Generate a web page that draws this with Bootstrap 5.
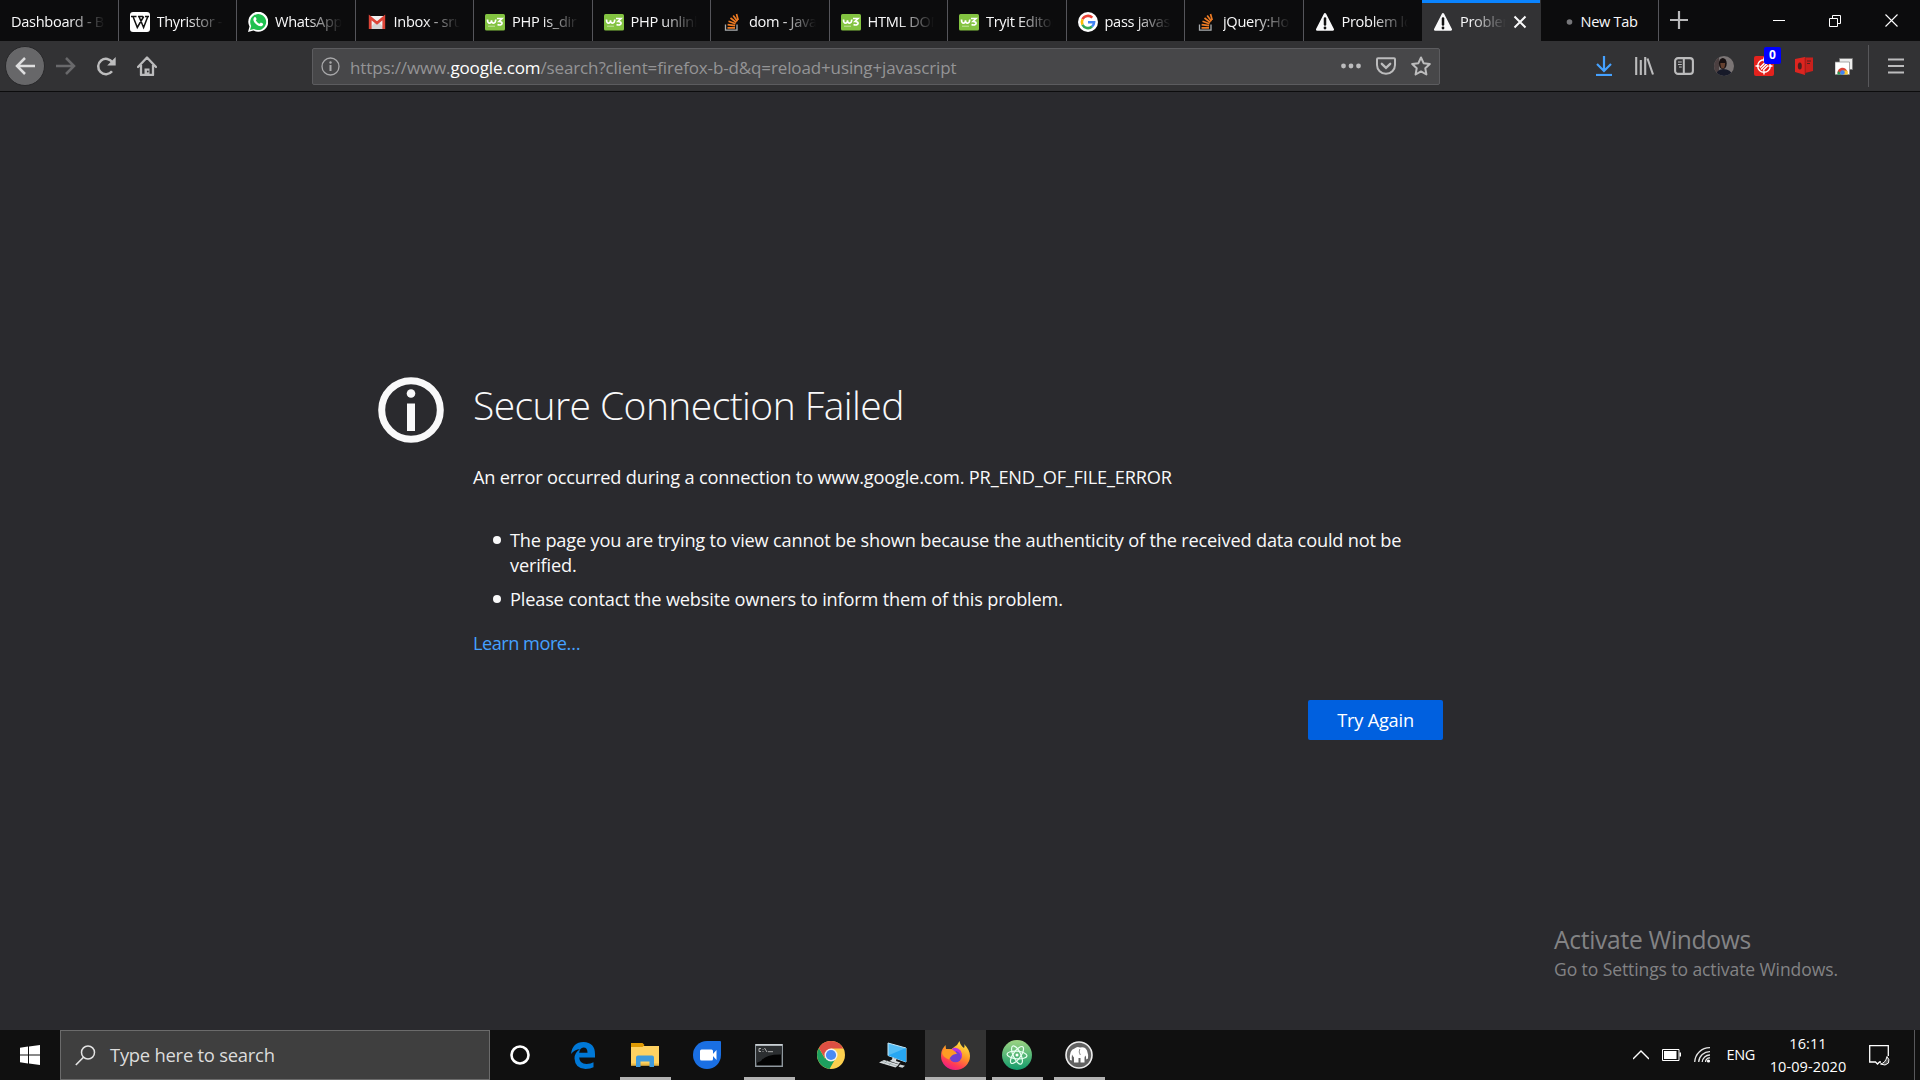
<!DOCTYPE html>
<html lang="en">
<head>
<meta charset="utf-8">
<title>Secure Connection Failed</title>
<link href="https://cdn.jsdelivr.net/npm/bootstrap@5.3.0/dist/css/bootstrap.min.css" rel="stylesheet">
<script src="https://cdn.jsdelivr.net/npm/bootstrap@5.3.0/dist/js/bootstrap.bundle.min.js"></script>
<style>
body{font-family:"Open Sans","Noto Sans",sans-serif;background:#2a2a2e;color:#f9f9fa}
svg{display:block;flex:none}
.tabstrip{height:41px;background:#0c0c0d}
.tab{width:118.5px;padding:2px 13px 0 11px;border-right:1px solid #55555a;font-size:14.6px;letter-spacing:-.32px;gap:7px}
.tab-title{flex:1 1 0;min-width:0;-webkit-mask-image:linear-gradient(to left,transparent 0,#000 36px);mask-image:linear-gradient(to left,transparent 0,#000 36px)}
.tab-before{border-right-color:transparent}
.tab-active{background:#323234;box-shadow:inset 0 3px #0a84ff;border-right-color:transparent}
.tab-new{padding-left:12px}
.tab-new .tab-title{-webkit-mask-image:none;mask-image:none}
.winbtn{width:56.5px;height:41px}
.toolbar{height:51px;background:#323234;border-bottom:1px solid #0c0c0d;padding-left:5px}
.navbtns{width:307px;gap:.6px}
.tool{width:40px;height:40px}
.backbtn{background:#676769;border:1px solid #28282a}
.urlbar{width:1128px;height:37px;background:#474749;border:1px solid #5c5c5f;border-radius:2px;padding:0 1px 0 8px}
.urltext{font-size:17px;color:#949496;margin-left:10px;letter-spacing:-.13px;padding-top:3px}
.urltext b{color:#fff;font-weight:400}
.urlicon{width:35px}
.count{top:-9px;left:10px;background:#00f;width:17px;height:17px;font-size:12px;line-height:15px;border-radius:2px;padding:0}
.tool-sep{width:1px;height:42px;background:#58585b}
.menu-btn{padding:0 16px 0 19px}
.page-area{padding:285px 0 0 378px}
.error-box{width:1065px;gap:28px}
.error-copy{font-size:18.2px;line-height:25px;letter-spacing:-.18px}
.error-title{font-size:39px;line-height:56px;font-weight:300;letter-spacing:-.57px;margin:0 0 32px}
.error-list{margin:38px 0 19px;padding:0;list-style:none}
.error-list li{display:flex;gap:9px;padding-left:20px}
.error-list li+li{margin-top:9px}
.error-list li::before{content:"";flex:none;width:8px;height:8px;border-radius:50%;background:#f9f9fa;margin-top:8px}
.learn{color:#45a1ff;text-decoration:none;letter-spacing:-.5px}
.retry{width:135px;height:40px;background:#0060df;color:#fff;border-radius:2px;font-size:18.2px;letter-spacing:-.2px;margin-top:44px;padding:1px 0 0;border:0}
.watermark{left:1554px;top:921px;color:#838385}
.watermark .wm-a{font-size:24.6px;line-height:38px;letter-spacing:-.3px}
.watermark .wm-b{font-size:17.5px;line-height:20px;letter-spacing:-.08px}
.taskbar{height:50px;background:#101010}
.startbtn{width:60px}
.searchbox{width:430px;background:#3f3f3f;border:1px solid #6b6b6b;padding-left:14px;gap:14px;font-size:18.4px;letter-spacing:-.24px;color:#dcdcdc}
.app{width:62px;height:50px}
.app-cortana{width:60px;margin-right:2px}
.app.running{background:linear-gradient(#b2b2b2,#b2b2b2) center bottom/51px 3px no-repeat}
.app.focused{background:linear-gradient(#b2b2b2,#b2b2b2) center bottom/61px 3px no-repeat,linear-gradient(#333,#333) center/61px 50px no-repeat}
.tray{font-size:14.5px;letter-spacing:-.35px;color:#fff}
.tray-gap{margin-left:13px}
.clock{line-height:23px;width:90px;letter-spacing:.1px}
.desk-edge{width:1px;height:50px;background:#58585b;margin:0 5px 0 24px}
</style>
</head>
<body class="vh-100 overflow-hidden d-flex flex-column">
<svg width="0" height="0" class="position-absolute">
<defs>
<symbol id="w3" viewBox="0 0 20 20"><rect y="2" width="20" height="16.500" rx="1.500" fill="#83c341"/><path d="M2.500 7.500c0 5 4 4.500 4 .8 0 3.700 4 4 4.300-.8M12 6.500h5l-3 3c5 0 3.500 5-1.500 3" fill="none" stroke="#fff" stroke-width="1.700"/><path d="M3 14.200h7" stroke="#c5e5a0"/></symbol>
<symbol id="so" viewBox="0 0 20 20"><path d="M3.500 12.500v5.700h11.500v-5.700" fill="none" stroke="#a9adb0" stroke-width="1.300"/><path d="M5.500 15.800h7.500M5.600 12.600l7.500 1M6.500 9.300l7 2.500M8.500 6l5.800 4.400M11.200 3.500l4.200 5.800M14.500 2l1.700 6" stroke="#ef7c24" stroke-width="1.700"/></symbol>
<symbol id="warn" viewBox="0 0 20 20"><path d="M10 2.300 17.800 17.500H2.200z" fill="#f9f9fa" stroke="#f9f9fa" stroke-width="2.500" stroke-linejoin="round"/><path d="M10 6.500v6" stroke="#111" stroke-width="2.500" stroke-linecap="round"/><circle cx="10" cy="16" r="1.400" fill="#111"/></symbol>
<symbol id="chrome" viewBox="0 0 28 28"><circle cx="14" cy="14" r="14" fill="#fdd04e"/><path d="M1.900 7A14 14 0 0 0 12.500 27.900l6-10.500L14 14 7.900 17.500z" fill="#1da05f"/><path d="M14 7.500h12.300A14 14 0 0 0 1.900 7l6 10z" fill="#dd4f43"/><circle cx="14" cy="14" r="6.500" fill="#f2f2f2"/><circle cx="14" cy="14" r="5.100" fill="#4a8af4"/></symbol>
</defs>
</svg>

<header>
<div class="tabstrip d-flex text-nowrap">
<div class="tab d-flex align-items-center"><span class="tab-title overflow-hidden">Dashboard - Bl</span></div>
<div class="tab d-flex align-items-center"><svg width="20" height="20"><rect width="20" height="20" rx="3" fill="#fff"/><path d="M1 4.500h5.500M8 4.500h5M15 4.500h4M3 4.500l4.300 11L13.700 4.500M9 4.500l4.600 11L17.800 4.500" stroke="#111" stroke-width="1.500" fill="none"/></svg><span class="tab-title overflow-hidden">Thyristor -</span></div>
<div class="tab d-flex align-items-center"><svg width="20" height="20"><path d="M0 20 1.500 14.500A10 10 0 1 1 5.500 18.500z" fill="#fff"/><path d="M2 18 3.200 14A8 8 0 1 1 6 16.900z" fill="#1fc04f"/><path d="M6.200 5.500c1-1 1.800-.4 2.400 1.700l-.8 1.400q1.500 2.400 3.800 3.200l1.200-1.300q2.500.8 2.400 1.700c-.8 3-4.400 2.400-7 .1-2.800-2.400-3.700-5-2-6.800z" fill="#fff"/></svg><span class="tab-title overflow-hidden">WhatsApp</span></div>
<div class="tab d-flex align-items-center"><svg width="20" height="20"><path d="M2 4h16v13H2z" fill="#f1f1f1"/><path d="M2 17l6-6.500 2 1.500 2-1.500 6 6.500z" fill="#d5d5d5"/><path d="M3.200 17V5.500L10 11l6.800-5.500V17" fill="none" stroke="#dc4437" stroke-width="2.800"/></svg><span class="tab-title overflow-hidden">Inbox - sru</span></div>
<div class="tab d-flex align-items-center"><svg width="20" height="20"><use href="#w3"/></svg><span class="tab-title overflow-hidden">PHP is_dir</span></div>
<div class="tab d-flex align-items-center"><svg width="20" height="20"><use href="#w3"/></svg><span class="tab-title overflow-hidden">PHP unlink</span></div>
<div class="tab d-flex align-items-center"><svg width="20" height="20"><use href="#so"/></svg><span class="tab-title overflow-hidden">dom - Java</span></div>
<div class="tab d-flex align-items-center"><svg width="20" height="20"><use href="#w3"/></svg><span class="tab-title overflow-hidden">HTML DOM</span></div>
<div class="tab d-flex align-items-center"><svg width="20" height="20"><use href="#w3"/></svg><span class="tab-title overflow-hidden">Tryit Editor</span></div>
<div class="tab d-flex align-items-center"><svg width="20" height="20" viewBox="0 0 20 20"><circle cx="10" cy="10" r="10" fill="#fff"/><g fill="none" stroke-width="2.600"><path d="M4.500 7.300A6.100 6.100 0 0 1 14.300 5.700" stroke="#ea4335"/><path d="M4.500 12.700a6.100 6.100 0 0 1 0-5.400" stroke="#fbbc05"/><path d="M14 14.600a6.100 6.100 0 0 1-9.500-1.900" stroke="#34a853"/><path d="M10 10.200h6.100a6.100 6.100 0 0 1-2.100 4.400" stroke="#4285f4"/></g></svg><span class="tab-title overflow-hidden">pass javasc</span></div>
<div class="tab d-flex align-items-center"><svg width="20" height="20"><use href="#so"/></svg><span class="tab-title overflow-hidden">jQuery:How</span></div>
<div class="tab tab-before d-flex align-items-center"><svg width="20" height="20"><use href="#warn"/></svg><span class="tab-title overflow-hidden">Problem lo</span></div>
<div class="tab tab-active d-flex align-items-center"><svg width="20" height="20"><use href="#warn"/></svg><span class="tab-title overflow-hidden">Problem</span><svg width="14" height="14"><path d="M1.500 1.500l11 11M12.500 1.500l-11 11" stroke="#f9f9fa" stroke-width="2"/></svg></div>
<div class="tab tab-new d-flex align-items-center"><svg width="21" height="20"><circle cx="16.500" cy="10" r="2.800" fill="#77777a"/></svg><span class="tab-title">New Tab</span></div>
<div class="d-flex align-items-center justify-content-center tool"><svg width="18" height="18"><path d="M9 0v18M0 9h18" stroke="#b9b9ba" stroke-width="2.200"/></svg></div>
<div class="d-flex ms-auto">
<div class="winbtn d-flex align-items-center justify-content-center"><svg width="12" height="12"><path d="M0 5.500h12" stroke="#fff"/></svg></div>
<div class="winbtn d-flex align-items-center justify-content-center"><svg width="12" height="12"><path d="M.5 3.500h8v8h-8zM3.500 3.500v-3h8v8h-3" stroke="#fff" fill="none"/></svg></div>
<div class="winbtn d-flex align-items-center justify-content-center"><svg width="13" height="13"><path d="M.5.5l12 12M12.500.5l-12 12" stroke="#fff" stroke-width="1.100"/></svg></div>
</div>
</div>

<div class="toolbar d-flex align-items-center">
<div class="navbtns d-flex">
<div class="tool backbtn rounded-circle d-flex align-items-center justify-content-center"><svg width="20" height="18"><path d="M20 9H2M10 1 2 9l8 8" stroke="#dededf" stroke-width="2.500" fill="none"/></svg></div>
<div class="tool d-flex align-items-center justify-content-center"><svg width="20" height="18"><path d="M0 9h18M10 1l8 8-8 8" stroke="#69696b" stroke-width="2.500" fill="none"/></svg></div>
<div class="tool d-flex align-items-center justify-content-center"><svg width="20" height="20"><path d="M16 15.200A7.700 7.700 0 1 1 16.500 6.500" stroke="#bcbcbd" stroke-width="2.500" fill="none"/><path d="M19.700 1v8.500h-8.500z" fill="#bcbcbd"/></svg></div>
<div class="tool d-flex align-items-center justify-content-center"><svg width="20" height="20"><path d="M1 11l9-9.500 9 9.500M4 9v10h12V9" stroke="#bcbcbd" stroke-width="2.300" fill="none" stroke-linejoin="round" stroke-linecap="round"/><path d="M7.500 19v-6.500h5V19z" fill="#bcbcbd"/><circle cx="10.800" cy="15.500" r=".9" fill="#323234"/></svg></div>
</div>
<div class="urlbar d-flex align-items-center">
<svg width="19" height="19"><circle cx="9.500" cy="9.500" r="8.500" fill="none" stroke="#a8a8aa" stroke-width="1.300"/><circle cx="9.500" cy="5.500" r="1.200" fill="#a8a8aa"/><path d="M9.500 8v6" stroke="#a8a8aa" stroke-width="2"/></svg>
<div class="urltext text-nowrap">https://www.<b>google.com</b>/search?client=firefox-b-d&amp;q=reload+using+javascript</div>
<div class="d-flex ms-auto">
<div class="urlicon d-flex align-items-center justify-content-center"><svg width="20" height="6"><g fill="#bcbcbd"><circle cx="2.500" cy="3" r="2.400"/><circle cx="10" cy="3" r="2.400"/><circle cx="17.500" cy="3" r="2.400"/></g></svg></div>
<div class="urlicon d-flex align-items-center justify-content-center"><svg width="20" height="18"><path d="M2 1.200h16q1 0 1 1V8a9 8.800 0 0 1-18 0V2.200q0-1 1-1z" stroke="#bcbcbd" stroke-width="2" fill="none"/><path d="M5.800 6.800 10 10.800l4.200-4" stroke="#bcbcbd" stroke-width="2.300" fill="none" stroke-linecap="round"/></svg></div>
<div class="urlicon d-flex align-items-center justify-content-center"><svg width="20" height="20"><path d="M10 1.500 12.600 7.200l6.200.8-4.500 4.300 1.100 6.200L10 15.400l-5.400 3.100 1.100-6.200L1.200 8l6.200-.8z" stroke="#bcbcbd" stroke-width="2" fill="none" stroke-linejoin="round"/></svg></div>
</div>
</div>
<div class="d-flex align-items-center ms-auto">
<div class="tool d-flex align-items-center justify-content-center"><svg width="16" height="20"><path d="M8 0v14M1 8l7 7 7-7" stroke="#45a1ff" stroke-width="2.200" fill="none"/><path d="M0 19h16" stroke="#45a1ff" stroke-width="2.200"/></svg></div>
<div class="tool d-flex align-items-center justify-content-center"><svg width="19" height="18"><path d="M1.200 0v18M5.800 3v15M10.200 0v18M12.500 1.500l5.500 16" stroke="#bcbcbd" stroke-width="2.100"/></svg></div>
<div class="tool d-flex align-items-center justify-content-center"><svg width="20" height="18"><rect x="1.100" y="1.100" width="17.800" height="15.800" rx="3" stroke="#bcbcbd" stroke-width="2.100" fill="none"/><path d="M9.800 1v16" stroke="#bcbcbd" stroke-width="2"/><path d="M4 5h3.800M4 7.500h3.800M5 10h2.800" stroke="#bcbcbd" stroke-width="1.200"/></svg></div>
<div class="tool d-flex align-items-center justify-content-center"><svg width="20" height="20"><clipPath id="av"><circle cx="10" cy="10" r="10"/></clipPath><g clip-path="url(#av)"><path d="M0 0h20v20H0z" fill="#7b7575"/><path d="M0 0h5v20H0z" fill="#4b3f40"/><path d="M2 20q0-6 7-7 8 0 10 7z" fill="#171a29"/><ellipse cx="8.800" cy="7.500" rx="3.900" ry="5.500" fill="#171011"/><path d="M6.300 7h4.800q0 5.500-2.300 5.500T6.300 7z" fill="#65402f"/></g></svg></div>
<div class="tool d-flex align-items-center justify-content-center"><div class="position-relative"><svg width="20" height="20"><rect width="20" height="20" rx="2" fill="#e4221d"/><g stroke="#fff" fill="none" stroke-width="1.400"><circle cx="10" cy="10" r="6.300"/><path d="M10 1.500v4M10 14.500v4M1.500 10h4M14.500 10h4M6 11.500l5.500-5.500M7 13.500 13.500 7M9 14.500 14 9.500"/></g></svg><span class="badge count position-absolute">0</span></div></div>
<div class="tool d-flex align-items-center justify-content-center"><svg width="18" height="18"><path d="M0 2 10 0v18L0 15z" fill="#dc2520"/><path d="M10 .5h8V14l-8 2z" fill="#c9201c"/><path d="M10.200 1v16" stroke="#8e1b19" stroke-width=".8"/><ellipse cx="4.800" cy="9" rx="2" ry="3.500" fill="#48201f"/><path d="M12 4h4M12 6.500h3" stroke="#572020"/></svg></div>
<div class="tool d-flex align-items-center justify-content-center"><svg width="18" height="17"><path d="M4.500.5h13v11h-13z" fill="#ececec" stroke="#777" stroke-width=".8"/><path d="M0 4h14.500v12.500H0z" fill="#fff" stroke="#888" stroke-width=".7"/><path d="M2.500 15.500A5 5 0 0 1 12.500 14l-5 .5z" fill="#db4437"/><path d="M7.500 12.500h4.600q1.200 2 .4 4H8z" fill="#f8c933"/><path d="M2.500 16.500q-.3-2 .7-3.500l3.500 3.500z" fill="#249b57"/><circle cx="7.500" cy="14.500" r="2.300" fill="#4285f4"/></svg></div>
<div class="tool-sep ms-1"></div>
<div class="menu-btn d-flex align-items-center"><svg width="16" height="16"><path d="M0 1.500h16M0 8h16M0 14.500h16" stroke="#bcbcbd" stroke-width="2.200"/></svg></div>
</div>
</div>
</header>

<main class="page-area flex-grow-1">
<div class="error-box d-flex">
<svg width="67" height="67"><circle cx="33" cy="33" r="29.300" fill="none" stroke="#f9f9fa" stroke-width="7"/><circle cx="33" cy="16.500" r="4.300" fill="#f9f9fa"/><path d="M33 26.500v27.500" stroke="#f9f9fa" stroke-width="8"/></svg>
<div class="error-copy flex-grow-1 d-flex flex-column">
<h1 class="error-title">Secure Connection Failed</h1>
<div>An error occurred during a connection to www.google.com. PR_END_OF_FILE_ERROR</div>
<ul class="error-list">
<li><span>The page you are trying to view cannot be shown because the authenticity of the received data could not be<br>verified.</span></li>
<li><span>Please contact the website owners to inform them of this problem.</span></li>
</ul>
<a class="learn align-self-start" href="#">Learn more…</a>
<button class="btn retry align-self-end">Try Again</button>
</div>
</div>
</main>

<div class="watermark position-absolute text-nowrap"><div class="wm-a">Activate Windows</div><div class="wm-b">Go to Settings to activate Windows.</div></div>

<footer class="taskbar d-flex">
<div class="startbtn d-flex align-items-center justify-content-center"><svg width="20" height="20"><path d="M0 2.800 8 1.600V9.500H0zM9 1.500 20 0v9.500H9zM0 10.500h8v7.900L0 17.200zM9 10.500h11V20L9 18.500z" fill="#fff"/></svg></div>
<div class="searchbox d-flex align-items-center"><svg width="21" height="21"><circle cx="13" cy="7.500" r="6.500" fill="none" stroke="#e4e4e4" stroke-width="1.500"/><path d="M8.500 12.200.8 20" stroke="#e4e4e4" stroke-width="1.600"/></svg><span>Type here to search</span></div>
<div class="app app-cortana d-flex align-items-center justify-content-center"><svg width="20" height="20"><circle cx="10" cy="10" r="8.500" fill="none" stroke="#fff" stroke-width="2.600"/></svg></div>
<div class="app d-flex align-items-center justify-content-center"><svg width="24" height="27"><path d="M0 12Q1.500 0 12.500 0 24 .5 24 12v3.500H8.200Q8.500 22 15.500 22q4.500 0 7-1.700v5Q19.500 27 14.500 27 4 26.500 3.500 16.500 3.500 10.500 9 7.300 3.500 7.500 0 12zM8.200 10.700h8.300q0-5.200-4-5.200-3.800.3-4.300 5.200z" fill="#0078d7"/></svg></div>
<div class="app running d-flex align-items-center justify-content-center"><svg width="28" height="24"><path d="M0 1h11l2 2h15v19.500H0z" fill="#ffd262"/><path d="M0 0h11.500l2 2-2 2H0z" fill="#df9a04"/><path d="M0 20.500h28v2H0z" fill="#eab944"/><path d="M5 24V14.500q0-2 2-2h14q2 0 2 2V24h-4.500v-5.500h-9V24z" fill="#3e9add"/></svg></div>
<div class="app d-flex align-items-center justify-content-center"><svg width="28" height="28"><path d="M14 0h13q1 0 1 1v13A14 14 0 1 1 14 0z" fill="#1a6fe3"/><rect x="7" y="8.500" width="13" height="11" rx="1.500" fill="#fff"/><path d="M19 14l4.500-5v10z" fill="#fff"/></svg></div>
<div class="app running d-flex align-items-center justify-content-center"><svg width="28" height="23"><path d="M.7.700h26.600v21.600H.7z" fill="#030303" stroke="#8f989e" stroke-width="1.400"/><path d="M1.400 1.400h25.200v9Q11 10 6 17l-4.600 2z" fill="#2b2e30"/><path d="M.7.900h26.600" stroke="#c9d0d4" stroke-width="1.800"/><path d="M6 4.500H4v3h2M8 5v.8M8 7v.8M9.500 4l2.500 4M13 7.700h5" stroke="#ccc" stroke-width=".8" fill="none"/></svg></div>
<div class="app d-flex align-items-center justify-content-center"><svg width="28" height="28"><use href="#chrome"/></svg></div>
<div class="app d-flex align-items-center justify-content-center"><svg width="28" height="26"><path d="M9 1l18 5v14L9 13.500z" fill="#55bdf5" stroke="#c4e6f5" stroke-width="1"/><path d="M27 6v14L9 13.500z" fill="#27a7f3"/><path d="M13.500 15.500l4 1.500-.5 2 4.500 1.500-2 1.500-9-3 2.500-1.500z" fill="#d5dadd"/><path d="M5 18l15 4.500-3.500 3L0 20.500z" fill="#d9dde0"/><path d="M3 19.300l15 4.800M5.500 21.500l3-3M10 22.800l3-2.500" stroke="#899" stroke-width=".6"/><path d="M21 22.500l5 1.200-2.500 2-4-1z" fill="#ccd2d5"/></svg></div>
<div class="app focused d-flex align-items-center justify-content-center"><svg width="29" height="29" viewBox="0 0 29 29"><defs><linearGradient id="ff" x1=".8" y1="0" x2=".3" y2="1"><stop offset="0" stop-color="#fff04a"/><stop offset=".45" stop-color="#ff9825"/><stop offset=".78" stop-color="#ff3c55"/><stop offset="1" stop-color="#e8198b"/></linearGradient></defs><path d="M0 15Q0 9 3 6l1.500-2L5 8l5 .5Q14 5 16 4l2.500-4Q19 4 23 7q1-2 0-4 6 6 6 12a14.500 14 0 0 1-29 0z" fill="url(#ff)"/><circle cx="14.500" cy="15" r="6.300" fill="#7040cf"/><path d="M10.500 8.200Q15 5 19.500 9.500 22 14 20 18q0-7-5-8l-2 3H9z" fill="#b833e1"/><path d="M1 12Q2 8 5 8l6 .3Q15 11 16 13q-3-.5-5 1.500t-3 4Q2 16 1 12z" fill="#ff9b24"/></svg></div>
<div class="app running d-flex align-items-center justify-content-center"><svg width="30" height="30"><defs><linearGradient id="at" x2="0" y2="1"><stop stop-color="#9dd482"/><stop offset="1" stop-color="#129b6c"/></linearGradient></defs><circle cx="15" cy="15" r="15" fill="url(#at)"/><g fill="none" stroke="#e8fff1" stroke-width="1.200"><ellipse cx="15" cy="15" rx="10" ry="3.800" transform="rotate(5 15 15)"/><ellipse cx="15" cy="15" rx="10" ry="3.800" transform="rotate(65 15 15)"/><ellipse cx="15" cy="15" rx="10" ry="3.800" transform="rotate(125 15 15)"/></g><circle cx="15" cy="15" r="1.500" fill="#fff"/></svg></div>
<div class="app running d-flex align-items-center justify-content-center"><svg width="28" height="28"><circle cx="14" cy="14" r="13" fill="#626262" stroke="#eee" stroke-width="1.600"/><path d="M5 19Q4 9 9.500 7.500 12 5 15 6.500q5-1.500 7 3 1.500 4 1 8l-1.800 1Q21.200 16 20.500 14.500q-1 1-1 2.500v4.500h-4v-4.500h-2v4.500H9v-5q-1-1-2-3-.5 3 0 6z" fill="#fff"/><path d="M14.800 8q-1.500 3 .5 6" stroke="#8a8a8a" fill="none"/></svg></div>
<div class="tray d-flex align-items-center ms-auto">
<svg width="16" height="10"><path d="M0 9 8 1l8 8" stroke="#fff" stroke-width="1.400" fill="none"/></svg>
<svg width="19" height="12" class="tray-gap"><path d="M.5.500h16.500v11H.5z" stroke="#fff" fill="none"/><path d="M2 2h12.500v8H2zM17.500 3.500H19v4h-1.500z" fill="#fff"/></svg>
<svg width="17" height="16" class="tray-gap"><g fill="none" stroke="#e5e5e5" stroke-width="1.300"><path d="M.7 15A15 15 0 0 1 16 .7"/><path d="M4.700 15A11 11 0 0 1 16 4.700"/><path d="M8.200 15A7.500 7.500 0 0 1 16 8"/><path d="M11.500 15A4 4 0 0 1 16 11"/></g><circle cx="14.500" cy="14" r="1.600" fill="#fff"/></svg>
<span class="ms-3">ENG</span>
<div class="clock text-center ms-2">16:11<br>10-09-2020</div>
<svg width="21" height="21" class="ms-3"><path d="M12 17h-1.500L8.500 19 6.500 17H.7V.7h18.600V11" stroke="#fff" stroke-width="1.300" fill="none"/><path d="M18 11.500q3 3 1.500 6.500-3 3.500-8 1 5-1 6.500-7.500z" fill="#555" stroke="#fff"/></svg>
<div class="desk-edge"></div>
</div>
</footer>
</body>
</html>
